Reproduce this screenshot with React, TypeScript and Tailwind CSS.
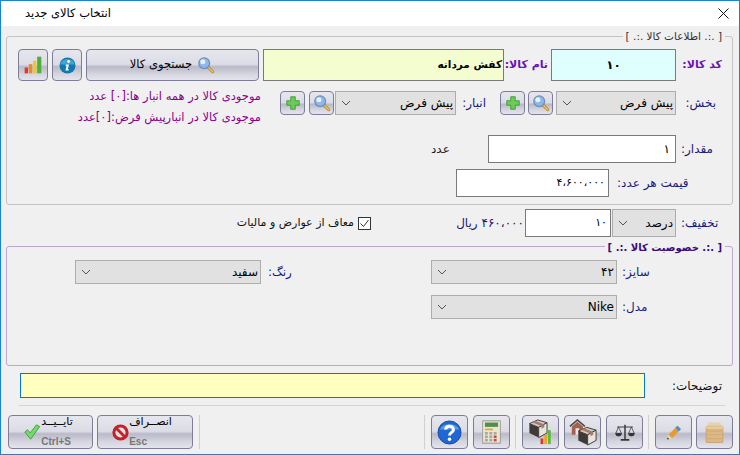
import React from "react";

const toolBtn =
  "flex items-center justify-center rounded-[4px] border border-[#7d7d99] bg-[linear-gradient(#e6e6ee_0%,#dcdce6_48%,#b9b9c9_56%,#d5d5df_80%,#e4e4ec_100%)]";
const selectBox =
  "flex h-[24px] items-center justify-between border border-[#adadad] bg-[#e1e1e1] pl-[5px] pr-[2px] text-[12px] text-black";
const inputBox = "flex items-center border border-[#7a7a7a] bg-white";

const Chevron = () => (
  <svg width="10" height="6" viewBox="0 0 10 6" fill="none" stroke="#555" strokeWidth="1">
    <path d="M1 1l4 4 4-4" />
  </svg>
);

const Select = ({ value, className }: { value: string; className: string }) => (
  <div className={`${selectBox} ${className}`}>
    <Chevron />
    <span dir="rtl">{value}</span>
  </div>
);

const Magnifier = ({ size = 18 }: { size?: number }) => (
  <svg width={size} height={size} viewBox="0 0 20 20">
    <path d="M11.5 11.5l6 6" stroke="#b98a2e" strokeWidth="3.4" strokeLinecap="round" />
    <path d="M11.5 11.5l6 6" stroke="#f1c766" strokeWidth="1.4" strokeLinecap="round" />
    <circle cx="8" cy="8" r="6" fill="#8fb8ea" stroke="#6f8fb8" strokeWidth="1.4" />
    <circle cx="6.5" cy="6.5" r="2.8" fill="#e6f1ff" />
  </svg>
);

const Plus = () => (
  <svg width="16" height="16" viewBox="0 0 18 18">
    <path d="M6.5 2h5v4.5H16v5h-4.500V16h-5v-4.500H2v-5h4.500z" fill="#6ccb55" stroke="#3a9a34" strokeWidth="1" />
  </svg>
);

const Bars = () => (
  <svg width="20" height="20" viewBox="0 0 24 24">
    <rect x="2" y="15" width="4" height="7" fill="#e0392b" />
    <rect x="7" y="11" width="4" height="11" fill="#f08a1d" />
    <rect x="12" y="7" width="4" height="15" fill="#f2c81e" />
    <rect x="17" y="2" width="5" height="20" fill="#4fae3d" />
  </svg>
);

const Info = () => (
  <svg width="17" height="17" viewBox="0 0 18 18">
    <circle cx="9" cy="9" r="8.500" fill="#1478ad" />
    <path d="M1.500 8a7.500 6 0 0 1 15 0z" fill="#3da4d4" />
    <circle cx="10.200" cy="4.800" r="1.500" fill="#fff" />
    <path d="M7 8h3.600l-1.300 5h1.200l-.3 1.200H6.800l1.200-5H6.800z" fill="#fff" />
  </svg>
);

const Check = () => (
  <svg width="18" height="18" viewBox="0 0 20 20">
    <path d="M2 10l3-2.500 3 3.500 7-9 3.500 2L8.500 18z" fill="#74d96a" stroke="#3c9c3c" strokeWidth="1" />
  </svg>
);

const NoEntry = () => (
  <svg width="17" height="17" viewBox="0 0 18 18">
    <circle cx="9" cy="9" r="7" fill="#f3dede" stroke="#c4202a" strokeWidth="3.200" />
    <path d="M4.500 4.500l9 9" stroke="#c4202a" strokeWidth="3" />
  </svg>
);

const Help = () => (
  <svg width="25" height="25" viewBox="0 0 26 26">
    <circle cx="13" cy="13" r="12" fill="#2067d4" stroke="#1a50a8" strokeWidth="1" />
    <path d="M3 10a10.500 8 0 0 1 20 0z" fill="#5d98ea" />
    <path d="M9 10a4 3.500 0 1 1 6 3c-1.500 1-2 1.500-2 3" fill="none" stroke="#fff" strokeWidth="3" />
    <circle cx="13" cy="20" r="1.800" fill="#fff" />
  </svg>
);

const Calculator = () => (
  <svg width="19" height="24" viewBox="0 0 26 28" preserveAspectRatio="none">
    <rect x="1" y="1" width="24" height="26" fill="#e9e6d6" stroke="#8b8b80" />
    <rect x="4" y="3" width="18" height="5" fill="#4f8f4a" />
    <rect x="4" y="10" width="11" height="2" fill="#e6a52c" />
    {[4, 10, 16].map((x) =>
      [14, 18, 22].map((y) => (
        <rect key={`${x}-${y}`} x={x} y={y} width="4" height="3" fill={x === 16 && y > 14 ? "#d8464a" : "#a9a9a0"} />
      ))
    )}
  </svg>
);

const Box = ({ x = 0, y = 0 }: { x?: number; y?: number }) => (
  <g transform={`translate(${x} ${y})`}>
    <path d="M0 5l9-4 10 3-9 5z" fill="#d0c8c0" stroke="#3a3634" />
    <path d="M0 5v10l10 5V9z" fill="#3f3a38" />
    <path d="M10 9v11l9-5V4z" fill="#e8e4e0" stroke="#3a3634" />
    <path d="M3 3.500l10 4v3l3-1.500V6L6 2z" fill="#a5796c" />
  </g>
);

const BoxChart = () => (
  <svg width="26" height="26" viewBox="0 0 27 28">
    <Box x={1} y={0} />
    <rect x="13" y="21" width="3" height="6" fill="#d8392b" />
    <rect x="17" y="17" width="3" height="10" fill="#f0a41d" />
    <rect x="21" y="12" width="3" height="15" fill="#5cb93d" />
  </svg>
);

const BoxHome = () => (
  <svg width="28" height="28" viewBox="0 0 30 30">
    <path d="M1 9l8-7 8 7" fill="none" stroke="#444" strokeWidth="1.500" />
    <path d="M3 9l6-5 6 5v9H3z" fill="#a2624e" />
    <rect x="7" y="11" width="4" height="7" fill="#f0e4dc" />
    <Box x={10} y={9} />
  </svg>
);

const Scales = () => (
  <svg width="20" height="20" viewBox="0 0 28 26" fill="none" stroke="#333" strokeWidth="1.300">
    <path d="M14 3v20" strokeWidth="2" />
    <path d="M8 24h12" strokeWidth="2.400" />
    <path d="M3 6h22" />
    <path d="M5 6l-4 9M5 6l4 9M23 6l-4 9M23 6l4 9" strokeWidth="1" />
    <path d="M1 15a4 3.500 0 0 0 8 0zM19 15a4 3.500 0 0 0 8 0z" fill="#333" />
  </svg>
);

const Pencil = () => (
  <svg width="18" height="18" viewBox="0 0 26 26">
    <path d="M5 17L18 4l5 5L10 22z" fill="#e99a2a" />
    <path d="M15 7l3-3 5 5-3 3z" fill="#3f93d8" />
    <path d="M5 17l5 5-7 2z" fill="#f1d9a8" />
    <path d="M3 24l1-3 2 2z" fill="#222" />
  </svg>
);

const Crate = () => (
  <svg width="21" height="23" viewBox="0 0 30 30" preserveAspectRatio="none">
    <path d="M4 7l3-5h16l3 5z" fill="#e6d2ad" />
    <rect x="3" y="7" width="24" height="21" rx="1" fill="#dcb884" stroke="#c29a66" />
    <path d="M5 13h20M5 18h20M5 23h20" stroke="#c9a472" />
    <rect x="3" y="7" width="24" height="3" fill="#e8cfa2" />
  </svg>
);

const Label = ({ text, className }: { text: string; className: string }) => (
  <span dir="rtl" className={`whitespace-nowrap text-[12px] ${className}`}>
    {text}
  </span>
);

export default function App() {
  return (
    <div
      dir="ltr"
      className="flex h-[455px] w-[740px] flex-col overflow-hidden border border-[#1883d7] bg-[#f0f0f0] font-['DejaVu_Sans',sans-serif] text-black"
    >
      {/* Title bar */}
      <div className="flex h-[25px] shrink-0 items-center justify-between bg-white pl-[24px] pr-[10px]">
        <span dir="rtl" className="text-[11.5px]">
          انتخاب کالای جدید
        </span>
        <svg width="11" height="11" viewBox="0 0 11 11" stroke="#111" strokeWidth="1">
          <path d="M.5.5l10 10M10.500.5l-10 10" />
        </svg>
      </div>

      {/* Item info */}
      <div className="relative ml-[5px] mt-[10px] h-[169px] w-[727px] shrink-0 rounded-[3px] border border-[#c4c4c4] pl-[11px] pt-[12px]">
        <span dir="rtl" className="absolute right-[7px] top-[-8px] bg-[#f0f0f0] px-[3px] text-[10.5px] text-[#333]">
          [ .:. اطلاعات کالا .:. ]
        </span>

        <div className="flex h-[32px]">
          <button className={`${toolBtn} w-[30px]`}><Bars /></button>
          <button className={`${toolBtn} ml-[4px] w-[30px]`}><Info /></button>
          <button className={`${toolBtn} ml-[4px] w-[173px] gap-[5px] text-[11.5px]`}>
            <span dir="rtl">جستجوی کالا</span>
            <Magnifier />
          </button>
          <div className="ml-[4px] flex w-[241px] items-center justify-end border border-[#7a7a7a] bg-[#f4fdd0] pr-[1px] text-[10.5px] font-bold">
            <span dir="rtl">کفش مردانه</span>
          </div>
          <div className="flex w-[47px] items-center justify-end pr-[3px]">
            <Label text="نام کالا:" className="text-[11px]! font-bold text-[#6a10b8]" />
          </div>
          <div className="flex w-[125px] items-center justify-center border border-[#7a7a7a] bg-[#dfffff] text-[12px] font-bold">
            ۱۰
          </div>
          <div className="flex w-[46px] items-center justify-end">
            <Label text="کد کالا:" className="text-[11px]! font-bold text-[#6a10b8]" />
          </div>
        </div>

        <div className="mt-[10px] flex h-[24px]">
          <div className="flex w-[243px] flex-col items-end text-[11.5px] leading-[21px] text-[#8b008b]">
            <span dir="rtl" className="mt-[-5px] whitespace-nowrap">موجودی کالا در همه انبار ها:[۰] عدد</span>
            <span dir="rtl" className="whitespace-nowrap">موجودی کالا در انبارپیش فرض:[۰]عدد</span>
          </div>
          <button className={`${toolBtn} ml-[19px] w-[25px]`}><Plus /></button>
          <button className={`${toolBtn} ml-[4px] w-[25px]`}><Magnifier /></button>
          <Select value="پیش فرض" className="ml-[1px] w-[121px]" />
          <div className="flex w-[30px] items-center justify-end">
            <Label text="انبار:" className="text-[#1a1a80]" />
          </div>
          <button className={`${toolBtn} ml-[14px] w-[25px]`}><Plus /></button>
          <button className={`${toolBtn} ml-[3px] w-[25px]`}><Magnifier /></button>
          <Select value="پیش فرض" className="ml-[3px] w-[120px]" />
          <div className="flex w-[40px] items-center justify-end">
            <Label text="بخش:" className="text-[#1a1a80]" />
          </div>
        </div>

        <div className="mt-[20px] flex h-[28px] items-center">
          <Label text="عدد" className="ml-[413px] w-[57px] text-left text-[#222]" />
          <div className={`${inputBox} h-full w-[188px] justify-end pr-[5px] text-[12px]`}>۱</div>
          <Label text="مقدار:" className="ml-[5px] text-[#1a1a80]" />
        </div>

        <div className="mt-[6px] flex h-[28px] items-center">
          <div className={`${inputBox} ml-[438px] h-full w-[153px] justify-end pr-[3px] text-[11px] tracking-[1px]`}>۴،۶۰۰،۰۰۰</div>
          <Label text="قیمت هر عدد:" className="ml-[8px] text-[#1a1a80]" />
        </div>
      </div>

      {/* Discount row */}
      <div className="mt-[4px] flex h-[28px] shrink-0 items-center">
        <span dir="rtl" className="ml-[235px] w-[118px] whitespace-nowrap text-[11px] text-[#111]">
          معاف از عوارض و مالیات
        </span>
        <div className="ml-[4px] flex h-[13px] w-[13px] items-center justify-center border border-[#333] bg-white">
          <svg width="11" height="11" viewBox="0 0 11 11" fill="none" stroke="#333" strokeWidth="1">
            <path d="M1.500 5.500l3 3 5-6.500" />
          </svg>
        </div>
        <span dir="rtl" className="ml-[76px] w-[77px] whitespace-nowrap text-[12px] text-[#191970]">
          <span className="tracking-[1px]">۴۶۰،۰۰۰</span> ریال
        </span>
        <div className={`${inputBox} ml-[1px] h-full w-[86px] justify-end pr-[3px] text-[11px]`}>۱۰</div>
        <Select value="درصد" className="ml-[1px] h-[28px] w-[64px]" />
        <Label text="تخفیف:" className="ml-[5px] text-[#1a1a80]" />
      </div>

      {/* Attributes */}
      <div className="relative ml-[5px] mt-[9px] h-[120px] w-[727px] shrink-0 rounded-[3px] border border-[#b9a9cb] pt-[13px]">
        <span dir="rtl" className="absolute right-[7px] top-[-7px] bg-[#f0f0f0] px-[3px] text-[10px] font-bold text-[#3c0a78]">
          [ .:. خصوصیت کالا .:. ]
        </span>
        <div className="flex h-[24px] items-center">
          <Select value="سفید" className="ml-[68px] w-[186px]" />
          <Label text="رنگ:" className="ml-[7px] w-[163px] text-left text-[#1a1a80]" />
          <Select value="۴۲" className="w-[186px]" />
          <Label text="سایز:" className="ml-[5px] text-[#1a1a80]" />
        </div>
        <div className="mt-[11px] flex h-[24px] items-center">
          <Select value="Nike" className="ml-[424px] w-[186px]" />
          <Label text="مدل:" className="ml-[5px] text-[#1a1a80]" />
        </div>
      </div>

      {/* Notes */}
      <div className="mt-[7px] flex h-[25px] shrink-0 items-center pl-[19px]">
        <div className="h-full w-[625px] border border-[#0078d7] bg-[#ffffc0]" />
        <Label text="توضیحات:" className="ml-[27px] text-[#111]" />
      </div>

      <div className="ml-[18px] mt-[7px] h-px w-[706px] shrink-0 bg-[#d4d4d4]" />

      {/* Footer */}
      <div className="mt-[9px] flex h-[34px] shrink-0 pl-[7px]">
        <button className={`${toolBtn} w-[85px] justify-between pl-[10px] pr-[15px]`}>
          <Check />
          <span className="flex flex-col items-start leading-[20px]">
            <span dir="rtl" className="text-[11px] text-black">تایــیــد</span>
            <span className="font-['Liberation_Sans'] text-[10px] font-bold text-[#777]">Ctrl+S</span>
          </span>
        </button>
        <button className={`${toolBtn} ml-[4px] w-[96px] justify-between pl-[9px] pr-[15px]`}>
          <NoEntry />
          <span className="flex flex-col items-start leading-[20px]">
            <span dir="rtl" className="text-[11px] text-black">انصــراف</span>
            <span className="font-['Liberation_Sans'] text-[10px] font-bold text-[#777]">Esc</span>
          </span>
        </button>
        <div className="ml-[6px] h-full w-px bg-[#d0d0d0]" />
        <div className="ml-[224px] h-full w-px bg-[#d0d0d0]" />
        <button className={`${toolBtn} ml-[6px] w-[37px]`}><Help /></button>
        <button className={`${toolBtn} ml-[5px] w-[37px]`}><Calculator /></button>
        <div className="ml-[5px] h-full w-px bg-[#d0d0d0]" />
        <button className={`${toolBtn} ml-[6px] w-[37px]`}><BoxChart /></button>
        <button className={`${toolBtn} ml-[5px] w-[37px]`}><BoxHome /></button>
        <button className={`${toolBtn} ml-[5px] w-[37px]`}><Scales /></button>
        <div className="ml-[5px] h-full w-px bg-[#d0d0d0]" />
        <button className={`${toolBtn} ml-[6px] w-[37px]`}><Pencil /></button>
        <button className={`${toolBtn} ml-[4px] w-[37px]`}><Crate /></button>
      </div>
    </div>
  );
}
